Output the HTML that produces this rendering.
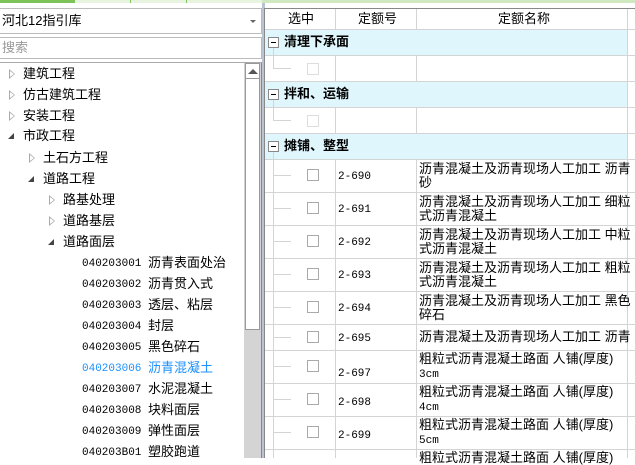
<html><head><style>
*{margin:0;padding:0;box-sizing:border-box}
body{width:635px;height:458px;overflow:hidden;background:#fff;font-family:"Liberation Sans","Noto Sans CJK SC","WenQuanYi Zen Hei",sans-serif;font-size:12px;color:#000;position:relative}
.a{position:absolute}
.t{position:absolute;white-space:nowrap;font-size:12px;line-height:14px}
.code{font-family:"Liberation Mono","DejaVu Sans Mono",monospace;font-size:11px}
.tri{position:absolute;width:0;height:0;border-top:5px solid transparent;border-bottom:5px solid transparent;border-left:6px solid #aaa}
.tri:after{content:"";position:absolute;left:-5px;top:-3px;border-top:3px solid transparent;border-bottom:3px solid transparent;border-left:4px solid #fff}
.dn{position:absolute;width:0;height:0;border-left:6px solid transparent;border-bottom:6px solid #444}
.hl{position:absolute;height:1px;background:#d4d4d4}
.vl{position:absolute;width:1px;background:#d4d4d4}
.cb{position:absolute;width:12px;height:12px;border:1px solid #aaa;background:#fff}
</style></head><body>
<div class="a" style="left:0;top:0;width:635px;height:3px;background:#e8f4e0"></div>
<div class="a" style="left:0;top:0;width:75px;height:3px;background:#7cc35a"></div>
<div class="a" style="left:130px;top:0;width:1px;height:3px;background:#7cc35a"></div>
<div class="a" style="left:186px;top:0;width:1px;height:3px;background:#7cc35a"></div>
<div class="a" style="left:262px;top:0;width:373px;height:3px;background:#cfe8c0"></div>
<!-- combo -->
<div class="a" style="left:0;top:8px;width:262px;height:26px;border:1px solid #bbb;border-left:none"></div>
<div class="t" style="left:2px;top:14px;font-size:13px">河北12指引库</div>
<div class="a" style="left:250px;top:20px;border-left:3px solid transparent;border-right:3px solid transparent;border-top:3px solid #666"></div>
<div class="a" style="left:0;top:37px;width:262px;height:22px;border:1px solid #bbb;border-left:none"></div>
<div class="t" style="left:2px;top:41px;font-size:13px;color:#999">搜索</div>
<!-- tree -->
<div class="a" style="left:0;top:62px;width:262px;height:396px;border-top:1px solid #aaa;border-right:1px solid #888"></div>
<div class="a" style="left:244px;top:63px;width:17px;height:395px;background:#d4d4d4"></div>
<div class="a" style="left:245px;top:63px;width:15px;height:267px;background:#fff;border:1px solid #999"></div>
<div class="a" style="left:245px;top:63px;width:15px;height:16px;background:#fff;border:1px solid #999"></div>
<div class="a" style="left:248px;top:69px;border-left:5px solid transparent;border-right:5px solid transparent;border-bottom:5px solid #555"></div>
<div class="tri" style="left:9px;top:69px"></div><div class="t" style="left:23px;top:67px;font-size:13px">建筑工程</div>
<div class="tri" style="left:9px;top:90px"></div><div class="t" style="left:23px;top:88px;font-size:13px">仿古建筑工程</div>
<div class="tri" style="left:9px;top:111px"></div><div class="t" style="left:23px;top:109px;font-size:13px">安装工程</div>
<div class="dn" style="left:8px;top:133px"></div><div class="t" style="left:23px;top:129px;font-size:13px">市政工程</div>
<div class="tri" style="left:29px;top:153px"></div><div class="t" style="left:43px;top:151px;font-size:13px">土石方工程</div>
<div class="dn" style="left:28px;top:176px"></div><div class="t" style="left:43px;top:172px;font-size:13px">道路工程</div>
<div class="tri" style="left:49px;top:195px"></div><div class="t" style="left:63px;top:193px;font-size:13px">路基处理</div>
<div class="tri" style="left:49px;top:216px"></div><div class="t" style="left:63px;top:214px;font-size:13px">道路基层</div>
<div class="dn" style="left:48px;top:239px"></div><div class="t" style="left:63px;top:235px;font-size:13px">道路面层</div>
<div class="t code" style="left:82px;top:257px">040203001</div><div class="t" style="left:148px;top:256px;font-size:13px">沥青表面处治</div>
<div class="t code" style="left:82px;top:278px">040203002</div><div class="t" style="left:148px;top:277px;font-size:13px">沥青贯入式</div>
<div class="t code" style="left:82px;top:299px">040203003</div><div class="t" style="left:148px;top:298px;font-size:13px">透层、粘层</div>
<div class="t code" style="left:82px;top:320px">040203004</div><div class="t" style="left:148px;top:319px;font-size:13px">封层</div>
<div class="t code" style="left:82px;top:341px">040203005</div><div class="t" style="left:148px;top:340px;font-size:13px">黑色碎石</div>
<div class="t code" style="left:82px;top:362px;color:#1e90ff">040203006</div><div class="t" style="left:148px;top:361px;font-size:13px;color:#1e90ff">沥青混凝土</div>
<div class="t code" style="left:82px;top:383px">040203007</div><div class="t" style="left:148px;top:382px;font-size:13px">水泥混凝土</div>
<div class="t code" style="left:82px;top:404px">040203008</div><div class="t" style="left:148px;top:403px;font-size:13px">块料面层</div>
<div class="t code" style="left:82px;top:425px">040203009</div><div class="t" style="left:148px;top:424px;font-size:13px">弹性面层</div>
<div class="t code" style="left:82px;top:446px">040203B01</div><div class="t" style="left:148px;top:445px;font-size:13px">塑胶跑道</div>
<!-- splitter -->
<div class="a" style="left:262px;top:3px;width:3px;height:455px;background:#b8c4d4"></div>
<!-- table -->
<div class="a" style="left:264px;top:8px;width:371px;height:450px;border-top:1px solid #888;border-left:1px solid #888"></div>
<div class="hl" style="left:265px;top:29px;width:370px"></div>
<div class="vl" style="left:335px;top:9px;height:20px"></div>
<div class="vl" style="left:416px;top:9px;height:20px"></div>
<div class="vl" style="left:627px;top:9px;height:449px"></div>
<div class="t" style="left:288px;top:12px;font-size:13px">选中</div>
<div class="t" style="left:358px;top:12px;font-size:13px">定额号</div>
<div class="t" style="left:498px;top:12px;font-size:13px">定额名称</div>
<!-- groups -->
<div class="a" style="left:265px;top:30px;width:362px;height:25px;background:#e0f6fd"></div>
<div class="a" style="left:265px;top:82px;width:362px;height:25px;background:#e0f6fd"></div>
<div class="a" style="left:265px;top:134px;width:362px;height:25px;background:#e0f6fd"></div>
<div class="hl" style="left:265px;top:55px;width:370px"></div>
<div class="hl" style="left:265px;top:81px;width:370px"></div>
<div class="hl" style="left:265px;top:107px;width:370px"></div>
<div class="hl" style="left:265px;top:133px;width:370px"></div>
<div class="hl" style="left:265px;top:159px;width:370px"></div>
<div class="a" style="left:268px;top:37px;width:11px;height:11px;border:1px solid #888;background:#fff"><div class="a" style="left:2px;top:4px;width:5px;height:1px;background:#000"></div></div>
<div class="a" style="left:268px;top:89px;width:11px;height:11px;border:1px solid #888;background:#fff"><div class="a" style="left:2px;top:4px;width:5px;height:1px;background:#000"></div></div>
<div class="a" style="left:268px;top:141px;width:11px;height:11px;border:1px solid #888;background:#fff"><div class="a" style="left:2px;top:4px;width:5px;height:1px;background:#000"></div></div>
<div class="t" style="left:284px;top:35px;font-size:13px;font-weight:bold">清理下承面</div>
<div class="t" style="left:284px;top:87px;font-size:13px;font-weight:bold">拌和、运输</div>
<div class="t" style="left:284px;top:139px;font-size:13px;font-weight:bold">摊铺、整型</div>
<div class="vl" style="left:335px;top:56px;height:25px"></div><div class="vl" style="left:416px;top:56px;height:25px"></div>
<div class="vl" style="left:335px;top:108px;height:25px"></div><div class="vl" style="left:416px;top:108px;height:25px"></div>
<div class="vl" style="left:273px;top:48px;height:20px"></div><div class="hl" style="left:273px;top:68px;width:18px"></div>
<div class="vl" style="left:273px;top:100px;height:20px"></div><div class="hl" style="left:273px;top:120px;width:18px"></div>
<div class="cb" style="left:307px;top:63px;border-color:#ddd"></div>
<div class="cb" style="left:307px;top:115px;border-color:#ddd"></div>
<div class="vl" style="left:273px;top:152px;height:306px"></div>
<div class="vl" style="left:335px;top:160px;height:298px"></div>
<div class="vl" style="left:416px;top:160px;height:298px"></div>
<!-- rows -->
<div id="rows"></div>
<div class="hl" style="left:265px;top:192px;width:370px"></div>
<div class="hl" style="left:265px;top:225px;width:370px"></div>
<div class="hl" style="left:265px;top:258px;width:370px"></div>
<div class="hl" style="left:265px;top:291px;width:370px"></div>
<div class="hl" style="left:265px;top:324px;width:370px"></div>
<div class="hl" style="left:265px;top:350px;width:370px"></div>
<div class="hl" style="left:265px;top:383px;width:370px"></div>
<div class="hl" style="left:265px;top:416px;width:370px"></div>
<div class="hl" style="left:265px;top:449px;width:370px"></div>

<div class="hl" style="left:273px;top:175px;width:18px"></div><div class="cb" style="left:307px;top:169px"></div><div class="t code" style="left:338px;top:170px">2-690</div>
<div class="t" style="left:419px;top:162px;font-size:13px;line-height:14px">沥青混凝土及沥青现场人工加工 沥青<br>砂</div>
<div class="hl" style="left:273px;top:208px;width:18px"></div><div class="cb" style="left:307px;top:202px"></div><div class="t code" style="left:338px;top:203px">2-691</div>
<div class="t" style="left:419px;top:195px;font-size:13px;line-height:14px">沥青混凝土及沥青现场人工加工 细粒<br>式沥青混凝土</div>
<div class="hl" style="left:273px;top:241px;width:18px"></div><div class="cb" style="left:307px;top:235px"></div><div class="t code" style="left:338px;top:236px">2-692</div>
<div class="t" style="left:419px;top:228px;font-size:13px;line-height:14px">沥青混凝土及沥青现场人工加工 中粒<br>式沥青混凝土</div>
<div class="hl" style="left:273px;top:274px;width:18px"></div><div class="cb" style="left:307px;top:268px"></div><div class="t code" style="left:338px;top:269px">2-693</div>
<div class="t" style="left:419px;top:261px;font-size:13px;line-height:14px">沥青混凝土及沥青现场人工加工 粗粒<br>式沥青混凝土</div>
<div class="hl" style="left:273px;top:307px;width:18px"></div><div class="cb" style="left:307px;top:301px"></div><div class="t code" style="left:338px;top:302px">2-694</div>
<div class="t" style="left:419px;top:294px;font-size:13px;line-height:14px">沥青混凝土及沥青现场人工加工 黑色<br>碎石</div>
<div class="hl" style="left:273px;top:337px;width:18px"></div><div class="cb" style="left:307px;top:331px"></div><div class="t code" style="left:338px;top:332px">2-695</div>
<div class="t" style="left:419px;top:330px;font-size:13px;line-height:14px">沥青混凝土及沥青现场人工加工 沥青</div>
<div class="hl" style="left:273px;top:366px;width:18px"></div><div class="cb" style="left:307px;top:360px"></div><div class="t code" style="left:338px;top:367px">2-697</div>
<div class="t" style="left:419px;top:352px;font-size:13px;line-height:14px">粗粒式沥青混凝土路面 人铺(厚度)</div><div class="t code" style="left:419px;top:368px">3cm</div>
<div class="hl" style="left:273px;top:399px;width:18px"></div><div class="cb" style="left:307px;top:393px"></div><div class="t code" style="left:338px;top:396px">2-698</div>
<div class="t" style="left:419px;top:385px;font-size:13px;line-height:14px">粗粒式沥青混凝土路面 人铺(厚度)</div><div class="t code" style="left:419px;top:401px">4cm</div>
<div class="hl" style="left:273px;top:432px;width:18px"></div><div class="cb" style="left:307px;top:426px"></div><div class="t code" style="left:338px;top:429px">2-699</div>
<div class="t" style="left:419px;top:418px;font-size:13px;line-height:14px">粗粒式沥青混凝土路面 人铺(厚度)</div><div class="t code" style="left:419px;top:434px">5cm</div>
<div class="t" style="left:419px;top:451px;font-size:13px;line-height:14px">粗粒式沥青混凝土路面 人铺(厚度)</div>
</body></html>
